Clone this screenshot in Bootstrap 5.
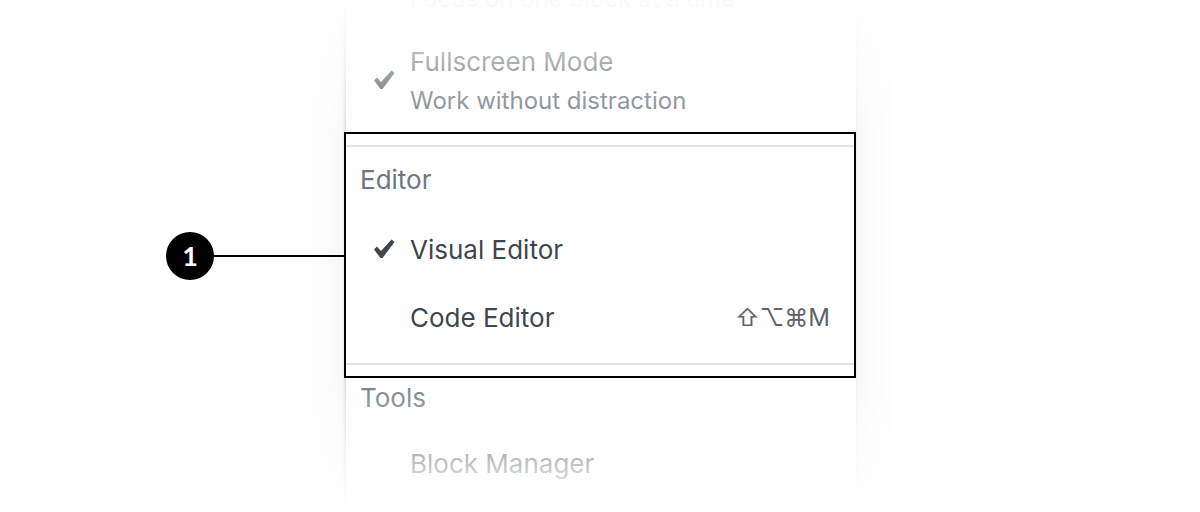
<!DOCTYPE html>
<html lang="en">
<head>
<meta charset="utf-8">
<meta name="viewport" content="width=device-width, initial-scale=1">
<title>Editor menu</title>
<link href="https://cdn.jsdelivr.net/npm/bootstrap@5.3.0/dist/css/bootstrap.min.css" rel="stylesheet">
<style>
body { font-family: Inter, "Liberation Sans", sans-serif; font-size: 26px; line-height: 32px; color: #40464d; background: #fff; }
.stage { display: grid; grid-template-columns: 1fr 512px 1fr; height: 100vh; }
.menu-panel { margin-left: 2px; box-shadow: -1px 0 3px rgba(90,125,150,.3), 0 0 44px rgba(25,30,35,.07); background: #fff; }
.menu-row { display: flex; align-items: center; width: 100%; padding: 0 24px 0 26px; border: 0; background: none; color: inherit; text-align: left; }
.tick { width: 24px; margin-right: 14px; flex: none; }
.tick svg { display: block; }
.info { font-size: 24px; color: #646c74; display: block; }
.group-name { color: #6c7781; font-size: 26px; line-height: 32px; padding-left: 14px; margin: 0; }
.upper { height: 132px; display: flex; flex-direction: column; justify-content: flex-end; padding-bottom: 12px; }
.upper .menu-row { line-height: 39px; }
.upper .menu-row + .menu-row { margin-top: 24px; }
.framed { margin-left: -2px; border: 2px solid #000; background: #fff; position: relative; z-index: 3; padding: 11px 0; }
.ruled { border: solid #e2e4e7; border-width: 2px 0; padding: 17px 0 11px; }
.ruled .menu-row { height: 68px; }
.ruled .group-name { margin-bottom: 20px; }
.lower { padding-top: 4px; min-height: 134px; }
.lower .menu-row { margin-top: 34px; }
.keys { color: #606469; margin-left: auto; font-size: 24px; }
.callout { display: flex; align-items: center; justify-content: flex-end; position: relative; z-index: 3; }
.callout-dot { width: 48px; height: 48px; background: #000; color: #fff; font: 700 27px/48px Lato, sans-serif; text-align: center; }
.callout-line { width: 130px; height: 2px; background: #000; }
.fade-top, .fade-bottom { position: absolute; left: 0; right: 0; z-index: 2; pointer-events: none; }
.fade-top { top: 0; height: 132px; background: linear-gradient(rgba(255,255,255,.97) 3%, rgba(255,255,255,.1)); }
.fade-bottom { top: 378px; bottom: 0; background: linear-gradient(rgba(255,255,255,.05), #fff 97%); }
</style>
</head>
<body>
<main class="stage position-relative overflow-hidden">
  <div class="callout"><span class="callout-dot rounded-circle">1</span><span class="callout-line"></span></div>
  <div class="menu-panel" role="menu">
    <section class="upper">
      <button type="button" class="menu-row"><span class="tick"></span><span><span class="info">Focus on one block at a time</span></span></button>
      <button type="button" class="menu-row"><span class="tick"><svg width="24" height="24" viewBox="0 0 24 24" aria-hidden="true"><path d="M2 11.500L5 8.500L9 13L19.500 1.500L22.500 4L10.500 20H8.500Z" fill="currentColor"/></svg></span><span>Fullscreen Mode<span class="info">Work without distraction</span></span></button>
    </section>
    <section class="framed">
      <div class="ruled">
        <h2 class="group-name fw-normal">Editor</h2>
        <button type="button" class="menu-row"><span class="tick"><svg width="24" height="24" viewBox="0 0 24 24" aria-hidden="true"><path d="M2 11.500L5 8.500L9 13L19.500 1.500L22.500 4L10.500 20H8.500Z" fill="currentColor"/></svg></span><span>Visual Editor</span></button>
        <button type="button" class="menu-row"><span class="tick"></span><span>Code Editor</span><span class="keys">⇧⌥⌘M</span></button>
      </div>
    </section>
    <section class="lower">
      <h2 class="group-name fw-normal">Tools</h2>
      <button type="button" class="menu-row"><span class="tick"></span><span>Block Manager</span></button>
    </section>
  </div>
  <div></div>
  <div class="fade-top"></div>
  <div class="fade-bottom"></div>
</main>
<script src="https://cdn.jsdelivr.net/npm/bootstrap@5.3.0/dist/js/bootstrap.bundle.min.js"></script>
</body>
</html>
